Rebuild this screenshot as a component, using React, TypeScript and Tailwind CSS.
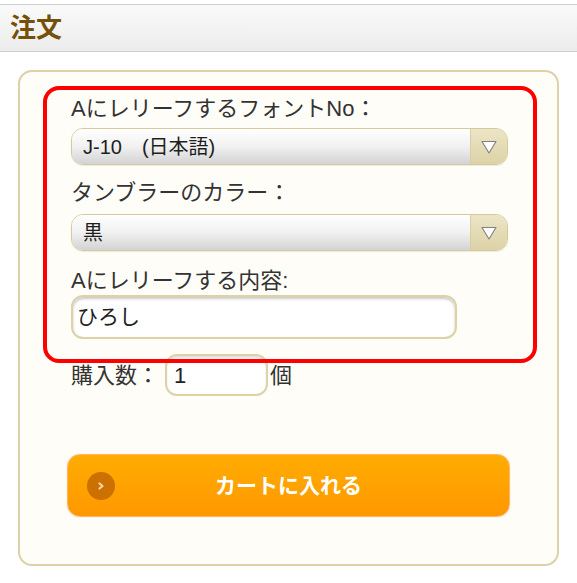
import React from "react";

const jp = { fontFamily: '"Liberation Sans", "Noto Sans CJK JP", sans-serif' };

function SelectBox({ value }: { value: string }) {
  return (
    <div className="flex h-[37px] w-[437px] overflow-hidden rounded-[12px] border border-[#d6ca9a] shadow-[0_1px_1px_rgba(0,0,0,0.08)]">
      <div className="flex flex-1 items-center bg-linear-to-b from-white via-[#f1f1f1] to-[#d3d3d3] pl-[11px] text-[20px] text-[#1e1e1e]">
        <span className="whitespace-pre">{value}</span>
      </div>
      <div className="flex w-[37px] items-center justify-center border-l border-[#d8cea6] bg-linear-to-b from-[#ece5c6] to-[#ddd2a6]">
        <svg width="18" height="16" viewBox="0 0 18 16">
          <path d="M2 2.5 L16 2.5 L9 14 Z" fill="#ffffff" stroke="#808080" strokeWidth="1.1" strokeLinejoin="round" />
        </svg>
      </div>
    </div>
  );
}

export default function App() {
  return (
    <div className="h-[583px] w-[577px] overflow-hidden bg-white" style={jp}>
      <div className="mt-[4px] flex h-[48px] items-center border-y border-[#cfcfcf] bg-linear-to-b from-[#fafafa] to-[#ececec] pl-[10px]">
        <span className="text-[26px] font-semibold leading-none text-[#75500a]">注文</span>
      </div>

      <div className="relative mx-[18px] mt-[18px] flex h-[496px] flex-col rounded-[14px] border-2 border-[#dcd1a8] bg-[#fffdf7] pl-[51px] pr-[48px] pt-[24px] text-[#333333]">
        <div className="text-[22px] leading-[26px]">AにレリーフするフォントNo：</div>
        <div className="mt-[6px]">
          <SelectBox value={"J-10\u3000(日本語)"} />
        </div>

        <div className="mt-[15px] text-[22px] leading-[26px]">タンブラーのカラー：</div>
        <div className="mt-[8px]">
          <SelectBox value="黒" />
        </div>

        <div className="mt-[17px] text-[22px] leading-[26px]">Aにレリーフする内容:</div>
        <div className="mt-[1px] flex h-[44px] w-[386px] items-center rounded-[12px] border-2 border-[#ddd2a6] bg-white pl-[4px] text-[21px] text-[#222] shadow-[inset_0_2px_3px_rgba(0,0,0,0.22)]">
          ひろし
        </div>

        <div className="mt-[15px] flex items-center text-[22px]">
          <span>購入数：</span>
          <div className="ml-[6px] flex h-[42px] w-[103px] items-center rounded-[12px] border-2 border-[#ddd2a6] bg-white pl-[7px] text-[22px] text-[#222] shadow-[inset_0_2px_2px_rgba(0,0,0,0.12)]">
            1
          </div>
          <span className="ml-[2px]">個</span>
        </div>

        <button className="relative ml-[-4px] mt-[58px] flex h-[63px] w-[443px] items-center justify-center rounded-[13px] border border-[#ffb56a] bg-linear-to-b from-[#ffac00] to-[#ff9800] shadow-[0_0_1px_rgba(255,140,60,0.6)]">
          <span className="absolute left-[19px] top-1/2 flex h-[28px] w-[28px] -translate-y-1/2 items-center justify-center rounded-full bg-[#cc7000]">
            <svg width="10" height="10" viewBox="0 0 10 10">
              <path d="M3.5 2.5 L6.5 5 L3.5 7.5" fill="none" stroke="#f7d4a8" strokeWidth="2.2" strokeLinecap="round" strokeLinejoin="round" />
            </svg>
          </span>
          <span className="text-[21px] font-bold text-white">カートに入れる</span>
        </button>

        <div className="pointer-events-none absolute left-[23px] top-[14px] h-[277px] w-[494px] rounded-[16px] border-[4px] border-[#ff0000]" />
      </div>
    </div>
  );
}
